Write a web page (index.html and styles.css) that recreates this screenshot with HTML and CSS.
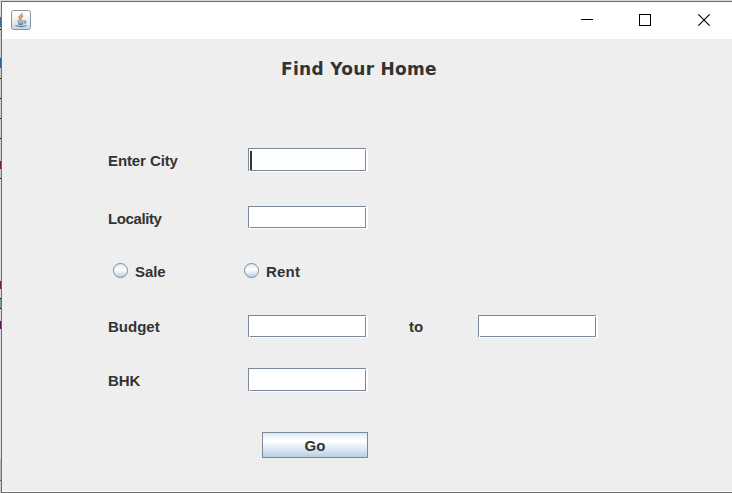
FILE: index.html
```html
<!DOCTYPE html>
<html lang="en">
<head>
<meta charset="utf-8">
<title>Find Your Home</title>
<link rel="stylesheet" href="styles.css">
</head>
<body>
<div class="desktop">
  <div class="backdrop"></div>
  <main class="window">
    <header class="titlebar">
      <svg class="java" width="20" height="20" viewBox="0 0 20 20" fill="none">
        <defs><linearGradient id="tile" x1="0" y1="0" x2="0" y2="1"><stop offset="0" stop-color="#fff"/><stop offset=".5" stop-color="#eef1f3"/><stop offset="1" stop-color="#c9d3da"/></linearGradient></defs>
        <rect x=".5" y=".5" width="19" height="19" rx="2" fill="url(#tile)" stroke="#8296a5"/>
        <path d="M10.8 2.8C12 5 7.3 6.2 8.2 8.2C8.5 9 9.2 9.5 9.4 10M12.3 5.8C9.7 7 9.6 8 10.5 9.7" stroke="#e58a4e" stroke-width="1.5"/>
        <path d="M6.2 11H12.8M6.8 12.7Q9.5 13.7 12.6 12.7M7.3 14.3Q9.5 15.2 12 14.3M13 11C15.7 10.5 15.4 12.8 13.2 13.4M4.5 15.5Q9.8 17.7 15.3 15.5" stroke="#557e9e" stroke-width="1.1"/>
      </svg>
      <div class="controls">
        <svg width="12" height="12"><path d="M0 5.5H12" stroke="#000"/></svg>
        <svg width="12" height="12"><rect x=".5" y=".5" width="11" height="11" fill="none" stroke="#000"/></svg>
        <svg width="12" height="12"><path d="M.3 .3L11.7 11.7M11.7 .3L.3 11.7" stroke="#000" stroke-width="1.1"/></svg>
      </div>
    </header>
    <form class="form">
      <h1 class="heading">Find Your Home</h1>
      <div class="row city"><label class="label">Enter City</label><div class="field focused"><span class="caret"></span></div></div>
      <div class="row locality"><label class="label tight">Locality</label><div class="field short"></div></div>
      <div class="choices">
        <label class="choice"><span class="radio"></span>Sale</label>
        <label class="choice"><span class="radio"></span>Rent</label>
      </div>
      <div class="row budget"><label class="label">Budget</label><div class="field short"></div><span class="to">to</span><div class="field short"></div></div>
      <div class="row bhk"><label class="label">BHK</label><div class="field"></div></div>
      <button class="go" type="button">Go</button>
    </form>
  </main>
</div>
</body>
</html>
```
FILE: styles.css
```css
* { box-sizing: border-box; }
body { margin: 0; background: #d9d9d9; overflow: hidden; }
.desktop { display: flex; width: 732px; height: 493px; padding-top: 1px; }
.backdrop {
  width: 1px;
  background: linear-gradient(#ddd 0 16px, #3e6ea5 16px 26px, #d8c89a 26px 28px, #111 28px 29px, #ccc 29px 57px, #315f90 57px 67px, #ccc 67px 77px, #111 77px 78px, #ccc 78px 97px, #111 97px 98px, #ccc 98px 117px, #111 117px 118px, #ccc 118px 137px, #111 137px 138px, #ccc 138px 160px, #701a4b 160px 168px, #ccc 168px 177px, #111 177px 178px, #ddd 178px 280px, #701a4b 280px 288px, #ddd 288px 297px, #111 297px 298px, #6fa0ac 298px 307px, #111 307px 308px, #ddd 308px 320px, #60105a 320px 328px, #ddd 328px 458px, #bbb 458px 479px, #555 479px 480px, #ccc 480px);
}
.window {
  flex: 1;
  border: solid #6d6d6d;
  border-width: 1px 0 1px 1px;
  background: #eee;
  font: bold 15px "Liberation Sans", Arial, sans-serif;
  color: #333;
}
.titlebar { display: flex; justify-content: space-between; height: 37px; padding: 8px 22px 0 9px; background: #fff; }
.controls { display: flex; gap: 46px; padding-top: 4px; }
.controls svg:last-child { margin-left: 1px; }
.form { height: 453px; padding-left: 106px; border-bottom: 1px solid #fff; }
.heading { width: 502px; height: 60px; margin: 0; font: bold 17px/60px "DejaVu Sans", sans-serif; letter-spacing: .3px; text-align: center; }
.row { display: flex; height: 24px; }
.label { width: 140px; line-height: 25px; letter-spacing: -.1px; }
.tight { letter-spacing: -.4px; }
.city { margin-top: 49px; }
.locality { margin-top: 34px; }
.budget { margin-top: 32px; }
.budget .label { line-height: 24px; letter-spacing: 0; }
.bhk { margin-top: 29px; }
.field {
  position: relative;
  width: 118px;
  height: 23px;
  border: 1px solid #7a8a99;
  background: #fff;
  box-shadow: 1px 1px #fff, 2px 1px #fff;
}
.field::before, .field::after { content: ""; position: absolute; width: 1px; height: 1px; background: #fff; }
.field::before { right: -1px; top: 0; }
.field::after { left: 0; bottom: -1px; }
.short { height: 22px; }
.focused { padding: 2px 0 0 1px; }
.caret { display: block; width: 2px; height: 19px; background: #333; }
.to { width: 112px; padding-left: 43px; line-height: 24px; }
.choices { display: flex; height: 24px; margin-top: 29px; padding-left: 5px; }
.choice { display: flex; align-items: center; gap: 7px; width: 131px; letter-spacing: -.1px; }
.choice + .choice { letter-spacing: .2px; }
.radio {
  width: 15px;
  height: 15px;
  margin-top: -1px;
  border: 1px solid #7a8a99;
  border-radius: 50%;
  background: linear-gradient(#dde8f3, #fff 45%, #b8cfe5);
}
.go {
  display: block;
  width: 106px;
  height: 26px;
  margin: 40px 0 0 154px;
  padding: 0;
  border: 1px solid #7a8a99;
  background: linear-gradient(#dde8f3, #fff 32%, #fff 36%, #b8cfe5);
  font: inherit;
  color: #333;
}
```
